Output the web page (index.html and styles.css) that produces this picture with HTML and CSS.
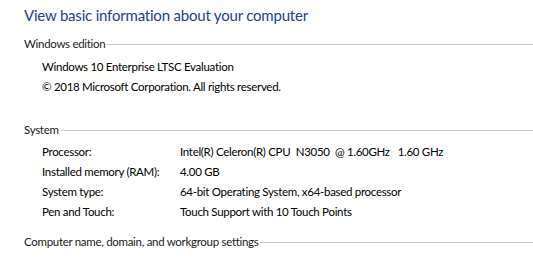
FILE: index.html
```html
<!DOCTYPE html>
<html lang="en">
<head>
    <meta charset="UTF-8">
    <title>System</title>
    <link rel="stylesheet" href="styles.css">
</head>
<body>
    <h1 class="title">View basic information about your computer</h1>

    <div class="section edition">
        <div class="section-head"><span>Windows edition</span></div>
        <div class="line">Windows 10 Enterprise LTSC Evaluation</div>
        <div class="line">&copy; 2018 Microsoft Corporation. All rights reserved.</div>
    </div>

    <div class="section system">
        <div class="section-head"><span>System</span></div>
        <div class="row">
            <div class="label">Processor:</div>
            <div class="value">Intel(R) Celeron(R) CPU&nbsp; N3050&nbsp; @ 1.60GHz &nbsp; 1.60 GHz</div>
        </div>
        <div class="row">
            <div class="label">Installed memory (RAM):</div>
            <div class="value">4.00 GB</div>
        </div>
        <div class="row">
            <div class="label">System type:</div>
            <div class="value">64-bit Operating System, x64-based processor</div>
        </div>
        <div class="row">
            <div class="label">Pen and Touch:</div>
            <div class="value">Touch Support with 10 Touch Points</div>
        </div>
    </div>

    <div class="section computer">
        <div class="section-head"><span>Computer name, domain, and workgroup settings</span></div>
    </div>
</body>
</html>
```

FILE: styles.css
```css
* {
    margin: 0;
    padding: 0;
    box-sizing: border-box;
}

body {
    background: #fff;
    color: #000;
    font-family: Lato, 'Noto Sans', sans-serif;
    font-size: 11.5px;
    letter-spacing: -0.3px;
    padding: 5px 0 0 24px;
    overflow: hidden;
    white-space: nowrap;
}

.title {
    font-size: 15px;
    font-weight: 400;
    letter-spacing: -0.2px;
    line-height: 20px;
    color: #233d9a;
}

.section-head {
    display: flex;
    align-items: center;
    height: 20px;
    line-height: 20px;
    color: #1a1a1a;
}

/* the grey rule after each heading */
.section-head::after {
    content: "";
    flex: 1;
    height: 1px;
    background: #c8c8c8;
    margin-left: 2px;
}

.edition {
    margin-top: 9px;
}

.edition .section-head {
    margin-bottom: 3px;
}

.line {
    padding-left: 18px;
    line-height: 20px;
}

.system {
    margin-top: 23px;
}

.system .section-head {
    margin-bottom: 2px;
}

.row {
    display: flex;
    padding-left: 18px;
    line-height: 20px;
}

.label {
    width: 138px;
    flex-shrink: 0;
}

.computer {
    margin-top: 10px;
}
```
